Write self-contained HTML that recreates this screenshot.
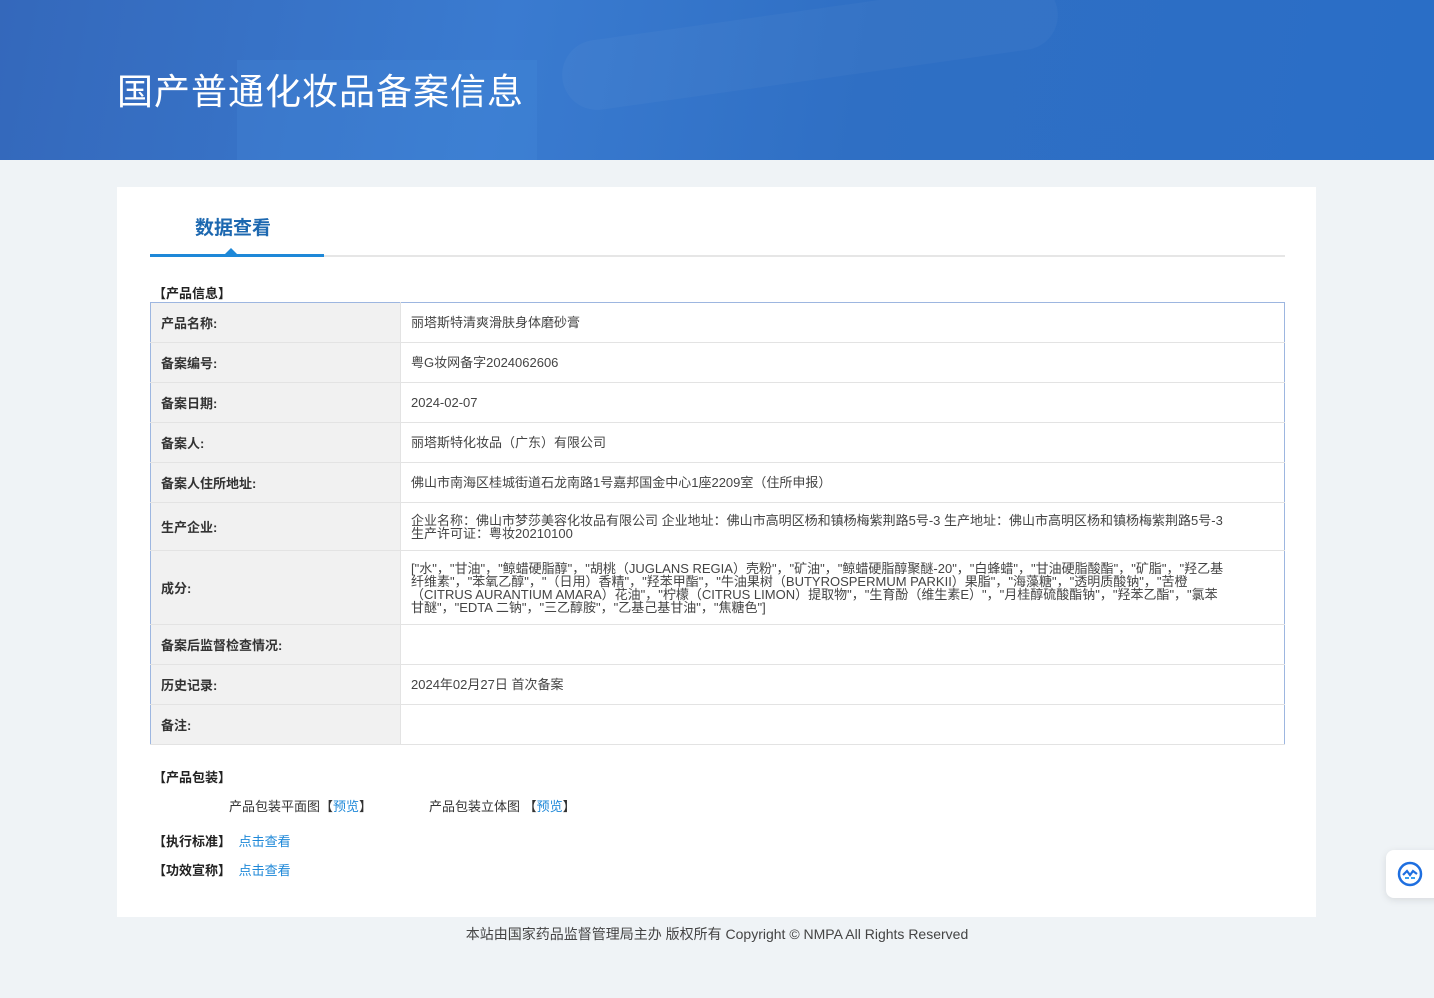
<!DOCTYPE html>
<html><head><meta charset="utf-8"><style>
*{margin:0;padding:0;box-sizing:border-box}
body{width:1434px;height:998px;background:#eff3f6;font-family:"Liberation Sans","Noto Sans CJK SC",sans-serif;position:relative;overflow:hidden;color:#333}
.hdr{position:absolute;left:0;top:0;width:1434px;height:160px;background:linear-gradient(100deg,#3468bb 0%,#3a7bd0 35%,#2f6fc4 60%,#2a6ec6 100%);overflow:hidden}
.hdr .b1{position:absolute;left:237px;top:60px;width:300px;height:120px;background:rgba(80,150,230,.18)}
.hdr .b2{position:absolute;left:560px;top:10px;width:500px;height:70px;border-radius:40px;background:rgba(255,255,255,.03);transform:rotate(-8deg)}
.hdr h1{position:absolute;left:117px;top:63px;font-size:36px;font-weight:normal;color:#fff;letter-spacing:1px}
.card{position:absolute;left:117px;top:187px;width:1199px;height:730px;background:#fff}
.tab{position:absolute;left:78px;top:26px;font-size:19px;font-weight:bold;color:#1d68b0}
.line{position:absolute;left:33px;top:68px;width:1135px;height:2px;background:#e6e6e6}
.line2{position:absolute;left:33px;top:67px;width:174px;height:3px;background:#1e88d8}
.tri{position:absolute;left:108px;top:61px;width:0;height:0;border-left:6px solid transparent;border-right:6px solid transparent;border-bottom:6px solid #1e88d8}
.sec{position:absolute;font-size:13px;font-weight:bold;color:#222}
table{position:absolute;left:33px;top:115px;width:1135px;border-collapse:collapse;border:1px solid #9db6e0;font-size:13px}
td{border-bottom:1px solid #e3e3e3;vertical-align:middle;padding:0 10px}
td.l{width:250px;background:#f1f1f1;font-weight:bold;color:#333;border-right:1px solid #e3e3e3}
td.v{color:#444;line-height:13px}
a{color:#1e88d8;text-decoration:none}
.t{position:absolute;font-size:13px;color:#333}
.foot{position:absolute;top:924px;left:0;width:1434px;text-align:center;font-size:14px;color:#444}
.float{position:absolute;left:1386px;top:850px;width:60px;height:48px;background:#fff;border-radius:8px;box-shadow:0 2px 8px rgba(0,0,0,.1)}
</style></head><body>
<div class="hdr"><div class="b1"></div><div class="b2"></div><h1>国产普通化妆品备案信息</h1></div>
<div class="card">
<div class="tab">数据查看</div>
<div class="line"></div><div class="line2"></div><div class="tri"></div>
<div class="sec" style="left:36px;top:96px">【产品信息】</div>
<table>
<tr style="height:40px"><td class="l">产品名称:</td><td class="v">丽塔斯特清爽滑肤身体磨砂膏</td></tr>
<tr style="height:40px"><td class="l">备案编号:</td><td class="v">粤G妆网备字2024062606</td></tr>
<tr style="height:40px"><td class="l">备案日期:</td><td class="v">2024-02-07</td></tr>
<tr style="height:40px"><td class="l">备案人:</td><td class="v">丽塔斯特化妆品（广东）有限公司</td></tr>
<tr style="height:40px"><td class="l">备案人住所地址:</td><td class="v">佛山市南海区桂城街道石龙南路1号嘉邦国金中心1座2209室（住所申报）</td></tr>
<tr style="height:48px"><td class="l">生产企业:</td><td class="v" style="padding-right:60px">企业名称：佛山市梦莎美容化妆品有限公司 企业地址：佛山市高明区杨和镇杨梅紫荆路5号-3 生产地址：佛山市高明区杨和镇杨梅紫荆路5号-3 生产许可证：粤妆20210100</td></tr>
<tr style="height:74px"><td class="l">成分:</td><td class="v" style="padding-right:60px">["水"，"甘油"，"鲸蜡硬脂醇"，"胡桃（JUGLANS REGIA）壳粉"，"矿油"，"鲸蜡硬脂醇聚醚-20"，"白蜂蜡"，"甘油硬脂酸酯"，"矿脂"，"羟乙基纤维素"，"苯氧乙醇"，"（日用）香精"，"羟苯甲酯"，"牛油果树（BUTYROSPERMUM PARKII）果脂"，"海藻糖"，"透明质酸钠"，"苦橙（CITRUS AURANTIUM AMARA）花油"，"柠檬（CITRUS LIMON）提取物"，"生育酚（维生素E）"，"月桂醇硫酸酯钠"，"羟苯乙酯"，"氯苯甘醚"，"EDTA 二钠"，"三乙醇胺"，"乙基己基甘油"，"焦糖色"]</td></tr>
<tr style="height:40px"><td class="l">备案后监督检查情况:</td><td class="v"></td></tr>
<tr style="height:40px"><td class="l">历史记录:</td><td class="v">2024年02月27日 首次备案</td></tr>
<tr style="height:40px"><td class="l">备注:</td><td class="v"></td></tr>
</table>
<div class="sec" style="left:36px;top:580px">【产品包装】</div>
<div class="t" style="left:112px;top:609px">产品包装平面图【<a>预览</a>】</div>
<div class="t" style="left:312px;top:609px">产品包装立体图 【<a>预览</a>】</div>
<div class="sec" style="left:36px;top:644px">【执行标准】 <a style="font-weight:normal;margin-left:4px">点击查看</a></div>
<div class="sec" style="left:36px;top:673px">【功效宣称】 <a style="font-weight:normal;margin-left:4px">点击查看</a></div>
</div>
<div class="foot">本站由国家药品监督管理局主办 版权所有 Copyright © NMPA All Rights Reserved</div>
<div class="float"><svg width="26" height="26" viewBox="0 0 26 26" style="position:absolute;left:11px;top:11px"><circle cx="13" cy="13" r="11" fill="none" stroke="#1e6fe0" stroke-width="2.5"/><path d="M6 14 L10 10 L13 14 L16 10 L20 13" fill="none" stroke="#1e6fe0" stroke-width="2.2"/><path d="M8 17 L12 17 M14 17 L18 17" stroke="#3aa0f0" stroke-width="2"/></svg></div>
</body></html>
